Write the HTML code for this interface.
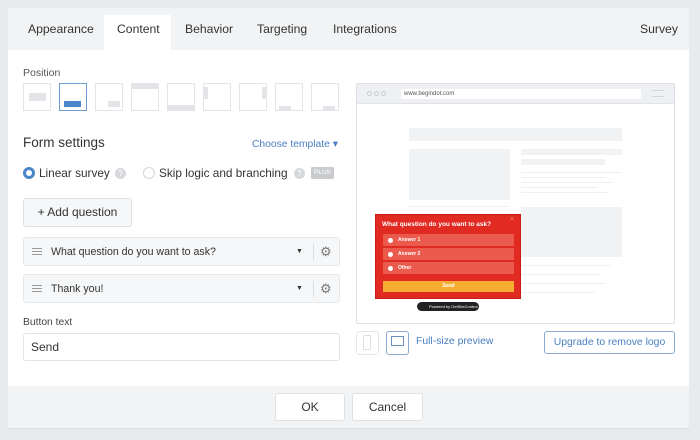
<!DOCTYPE html>
<html><head><style>
*{box-sizing:border-box;margin:0;padding:0}
body{width:700px;height:440px;background:#e9eaec;font-family:"Liberation Sans",sans-serif;position:relative;overflow:hidden;color:#333}
.a{position:absolute}
.panel{left:8px;top:8px;width:681px;height:421px;background:#fff}
.tabs{left:8px;top:8px;width:681px;height:42px;background:#f2f3f4}
.tab{top:8px;height:34px;line-height:42px;font-size:12.2px;color:#333}
.pos{top:83px;width:28px;height:28px;border:1px solid #e3e5e8;background:#fff}
.pos i{position:absolute;background:#e3e5e8}
.row{left:23px;width:317px;height:29px;background:#f6f7f8;border:1px solid #e6e8ea;border-radius:3px;font-size:10.6px;line-height:28px}
.hb{position:absolute;left:8px;top:10px;width:10px;height:7px;border-top:1px solid #999;border-bottom:1px solid #999}
.hb:after{content:"";position:absolute;left:0;top:2px;width:10px;height:1px;background:#999}
.bar{background:#f0f2f4}
.ln{background:#eef0f3;height:2px}
.btn{background:#fff;border:1px solid #dfe1e4;border-radius:3px;text-align:center;font-size:12px}
.ans{left:383px;width:131px;height:12px;background:#ea5a4d;color:#fff;font-size:5px;font-weight:bold;line-height:12px;padding-left:15px}
.ans:before{content:"";position:absolute;left:5px;top:3.5px;width:5px;height:5px;border-radius:50%;background:#fff}
</style></head><body>
<div class="a panel"></div>
<div class="a tabs"></div>
<div class="a" style="left:104px;top:15px;width:67px;height:35px;background:#fff"></div>
<div class="a tab" style="left:28px">Appearance</div>
<div class="a tab" style="left:117px">Content</div>
<div class="a tab" style="left:185px">Behavior</div>
<div class="a tab" style="left:257px">Targeting</div>
<div class="a tab" style="left:333px">Integrations</div>
<div class="a tab" style="left:640px">Survey</div>

<div class="a" style="left:23px;top:67px;font-size:10.5px;color:#555">Position</div>
<div class="a pos" style="left:23px"><i style="left:5px;top:9px;width:17px;height:8px"></i></div>
<div class="a pos" style="left:59px;border-color:#6d9bd1"><i style="left:4px;top:17px;width:17px;height:6px;background:#4a86c8"></i></div>
<div class="a pos" style="left:95px"><i style="left:12px;top:17px;width:12px;height:6px"></i></div>
<div class="a pos" style="left:131px"><i style="left:0;top:0;width:26px;height:5px"></i></div>
<div class="a pos" style="left:167px"><i style="left:0;top:21px;width:26px;height:5px"></i></div>
<div class="a pos" style="left:203px"><i style="left:0;top:3px;width:4px;height:12px"></i></div>
<div class="a pos" style="left:239px"><i style="left:22px;top:3px;width:4px;height:12px"></i></div>
<div class="a pos" style="left:275px"><i style="left:3px;top:22px;width:12px;height:4px"></i></div>
<div class="a pos" style="left:311px"><i style="left:11px;top:22px;width:12px;height:4px"></i></div>

<div class="a" style="left:23px;top:135px;font-size:13.5px;color:#333">Form settings</div>
<div class="a" style="left:252px;top:138px;font-size:10.3px;color:#4a7fc1">Choose template ▾</div>

<div class="a" style="left:23px;top:167px;width:12px;height:12px;border-radius:50%;border:3.5px solid #4a86c8"></div>
<div class="a" style="left:39px;top:166px;font-size:11.8px">Linear survey</div>
<div class="a" style="left:115px;top:168px;width:11px;height:11px;border-radius:50%;background:#d6d8db;color:#fff;font-size:8px;text-align:center;line-height:11px">?</div>
<div class="a" style="left:143px;top:167px;width:12px;height:12px;border-radius:50%;border:1px solid #d4d6d9"></div>
<div class="a" style="left:159px;top:166px;font-size:11.8px">Skip logic and branching</div>
<div class="a" style="left:294px;top:168px;width:11px;height:11px;border-radius:50%;background:#d6d8db;color:#fff;font-size:8px;text-align:center;line-height:11px">?</div>
<div class="a" style="left:311px;top:167px;width:23px;height:12px;background:#c9cbce;color:#fff;font-size:6.5px;text-align:center;line-height:12px;border-radius:1px">PLUS</div>

<div class="a btn" style="left:23px;top:198px;width:109px;height:29px;line-height:27px;background:#f6f7f8">+ Add question</div>

<div class="a row" style="top:237px"><span class="hb"></span><span style="position:absolute;left:27px">What question do you want to ask?</span><span style="position:absolute;left:272px;font-size:7px">▼</span><span style="position:absolute;left:289px;top:6px;width:1px;height:16px;background:#ddd"></span><span style="position:absolute;left:296px;color:#777;font-size:13px">⚙</span></div>
<div class="a row" style="top:274px"><span class="hb"></span><span style="position:absolute;left:27px">Thank you!</span><span style="position:absolute;left:272px;font-size:7px">▼</span><span style="position:absolute;left:289px;top:6px;width:1px;height:16px;background:#ddd"></span><span style="position:absolute;left:296px;color:#777;font-size:13px">⚙</span></div>

<div class="a" style="left:23px;top:317px;font-size:10.3px;color:#444">Button text</div>
<div class="a" style="left:23px;top:333px;width:317px;height:28px;border:1px solid #e3e5e8;border-radius:3px;font-size:12px;line-height:26px;padding-left:7px">Send</div>

<!-- preview -->
<div class="a" style="left:356px;top:83px;width:319px;height:241px;border:1px solid #dde0e4;border-radius:2px;background:#fff"></div>
<div class="a" style="left:357px;top:84px;width:317px;height:20px;background:#eef0f3;border-bottom:1px solid #e2e5e8"></div>
<div class="a" style="left:367px;top:91px;width:5px;height:5px;border:1px solid #c7cacf;border-radius:50%"></div>
<div class="a" style="left:374px;top:91px;width:5px;height:5px;border:1px solid #c7cacf;border-radius:50%"></div>
<div class="a" style="left:381px;top:91px;width:5px;height:5px;border:1px solid #c7cacf;border-radius:50%"></div>
<div class="a" style="left:401px;top:89px;width:240px;height:10px;background:#fff;border-radius:2px;font-size:6px;line-height:10px;padding-left:3px;color:#555">www.begindot.com</div>
<div class="a" style="left:652px;top:90px;width:12px;height:7px;border-top:1px solid #d3d6da;border-bottom:1px solid #d3d6da"></div>
<div class="a bar" style="left:409px;top:128px;width:213px;height:13px"></div>
<div class="a bar" style="left:409px;top:149px;width:101px;height:51px"></div>
<div class="a bar" style="left:521px;top:149px;width:101px;height:6px"></div>
<div class="a bar" style="left:521px;top:159px;width:84px;height:6px"></div>
<div class="a ln" style="left:521px;top:172px;width:101px;height:1px"></div>
<div class="a ln" style="left:521px;top:177px;width:84px;height:1px"></div>
<div class="a ln" style="left:521px;top:182px;width:92px;height:1px"></div>
<div class="a ln" style="left:521px;top:187px;width:76px;height:1px"></div>
<div class="a ln" style="left:521px;top:192px;width:88px;height:1px"></div>
<div class="a bar" style="left:521px;top:207px;width:101px;height:50px"></div>
<div class="a ln" style="left:409px;top:206px;width:100px;height:1px"></div>
<div class="a ln" style="left:521px;top:265px;width:90px;height:1px"></div>
<div class="a ln" style="left:521px;top:274px;width:80px;height:1px"></div>
<div class="a ln" style="left:521px;top:283px;width:84px;height:1px"></div>
<div class="a ln" style="left:521px;top:292px;width:74px;height:1px"></div>

<div class="a" style="left:375px;top:214px;width:146px;height:85px;background:#e02a22;border:1px solid #c91d16"></div>
<div class="a" style="left:382px;top:221px;font-size:6.5px;font-weight:bold;color:#fff">What question do you want to ask?</div>
<div class="a" style="left:510px;top:216px;font-size:7px;color:#f08c86">×</div>
<div class="a ans" style="top:234px">Answer 1</div>
<div class="a ans" style="top:248px">Answer 2</div>
<div class="a ans" style="top:262px">Other</div>
<div class="a" style="left:383px;top:281px;width:131px;height:11px;background:#f6ad32;color:#fff;font-size:5px;font-weight:bold;text-align:center;line-height:11px">Send</div>
<div class="a" style="left:417px;top:302px;width:62px;height:9px;background:#222;border-radius:5px;color:#fff;font-size:4px;line-height:9px;padding-left:12px">Powered by GetSiteControl</div>

<div class="a" style="left:356px;top:331px;width:23px;height:24px;border:1px solid #e5e7ea;border-radius:3px"></div>
<div class="a" style="left:363px;top:335px;width:8px;height:15px;border:1px solid #dcdfe3;border-radius:1px"></div>
<div class="a" style="left:386px;top:331px;width:23px;height:24px;border:1px solid #8aaad2;border-radius:3px"></div>
<div class="a" style="left:391px;top:336px;width:13px;height:10px;border:1px solid #6b8fbf"></div>
<div class="a" style="left:416px;top:336px;font-size:10.4px;color:#4a7fc1">Full-size preview</div>
<div class="a" style="left:544px;top:331px;width:131px;height:23px;border:1px solid #8aaad2;border-radius:3px;font-size:10.4px;color:#4a7fc1;text-align:center;line-height:21px">Upgrade to remove logo</div>

<div class="a" style="left:8px;top:386px;width:681px;height:43px;background:#f2f3f4;border-bottom:1px solid #dcdee1"></div>
<div class="a btn" style="left:275px;top:393px;width:70px;height:28px;line-height:26px">OK</div>
<div class="a btn" style="left:352px;top:393px;width:71px;height:28px;line-height:26px">Cancel</div>
</body></html>
